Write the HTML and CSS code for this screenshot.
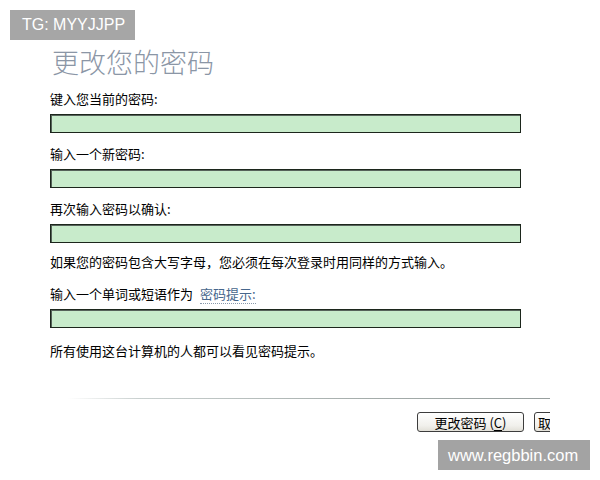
FILE: index.html
```html
<!DOCTYPE html>
<html lang="zh-CN">
<head>
<meta charset="utf-8">
<title>更改您的密码</title>
<link rel="stylesheet" href="styles.css">
</head>
<body>
<div class="page">
  <div class="clip">
    <div class="dialog">
      <h1 class="title">更改您的密码</h1>
      <div class="field">
        <div class="label">键入您当前的密码:</div>
        <div class="input"></div>
      </div>
      <div class="field">
        <div class="label">输入一个新密码:</div>
        <div class="input"></div>
      </div>
      <div class="field">
        <div class="label">再次输入密码以确认:</div>
        <div class="input"></div>
      </div>
      <p class="note note-caps">如果您的密码包含大写字母，您必须在每次登录时用同样的方式输入。</p>
      <div class="field field-hint">
        <div class="label">输入一个单词或短语作为 <span class="link">密码提示:</span></div>
        <div class="input"></div>
      </div>
      <p class="note note-hint">所有使用这台计算机的人都可以看见密码提示。</p>
      <div class="separator"></div>
      <div class="buttons">
        <button class="btn">更改密码 (<u>C</u>)</button>
        <button class="btn btn-cancel">取消</button>
      </div>
    </div>
  </div>
  <div class="wm wm-top">TG: MYYJJPP</div>
  <div class="wm wm-bottom">www.regbbin.com</div>
</div>
</body>
</html>
```

FILE: styles.css
```css
html, body {
  margin: 0;
  padding: 0;
  background: #ffffff;
}

body {
  font-family: "Noto Sans CJK SC", "Liberation Sans", sans-serif;
  color: #000;
}

.page {
  position: relative;
  width: 600px;
  height: 480px;
  overflow: hidden;
  background: #fff;
}

.clip {
  width: 550px;
  height: 480px;
  overflow: hidden;
}

.dialog {
  width: 660px;
  padding-top: 46px;
  padding-left: 50px;
  box-sizing: border-box;
}

.title {
  margin: 0;
  font-size: 27px;
  line-height: 32px;
  font-weight: 300;
  color: #8b96a6;
  padding-left: 2px;
  letter-spacing: 0;
}

.field {
  margin-top: 13px;
}

.label {
  font-size: 13px;
  line-height: 16px;
  margin-bottom: 7px;
  white-space: nowrap;
}

.input {
  width: 471px;
  height: 19px;
  box-sizing: border-box;
  background: #c8ebcb;
  border: 1px solid #1c261c;
  box-shadow: inset 1px 1px 0 #56625a;
}

.link {
  color: #46668c;
  border-bottom: 1px dotted #8a9aac;
  margin-left: 4px;
}

.note {
  margin: 0;
  font-size: 13px;
  line-height: 16px;
  white-space: nowrap;
}

.note-caps {
  margin-top: 11px;
}

.field-hint {
  margin-top: 16px;
}

.note-hint {
  margin-top: 15px;
}

.separator {
  margin-top: 39px;
  margin-left: 18px;
  height: 1px;
  background: linear-gradient(to right, #ffffff 0%, #c9d0cf 12%, #a5adab 50%, #8e9695 100%);
}

.buttons {
  display: flex;
  gap: 10px;
  margin-top: 13px;
  padding-left: 367px;
}

.btn {
  width: 107px;
  height: 20px;
  box-sizing: border-box;
  padding: 0;
  border: 1px solid #3d3d3d;
  border-radius: 3px;
  background: linear-gradient(#ffffff, #f1f0ec 70%, #e2e0d8);
  font-family: "Noto Sans CJK SC", "Liberation Sans", sans-serif;
  font-size: 13px;
  line-height: 17px;
  color: #000;
  flex: none;
}

.btn-cancel {
  width: 60px;
  text-align: left;
  padding-left: 3px;
}

.btn u {
  text-decoration-thickness: 1px;
  text-underline-offset: 2px;
}

.wm {
  position: absolute;
  background: #a6a6a6;
  color: #ffffff;
  font-family: "Liberation Sans", Arial, sans-serif;
  font-size: 16px;
  line-height: 30px;
  height: 30px;
  box-sizing: border-box;
  white-space: nowrap;
}

.wm-top {
  left: 10px;
  top: 10px;
  width: 125px;
  padding-left: 12px;
}

.wm-bottom {
  left: 438px;
  top: 440px;
  width: 152px;
  padding-left: 10px;
  font-size: 16.5px;
  background: #a3a3a3;
}
```
